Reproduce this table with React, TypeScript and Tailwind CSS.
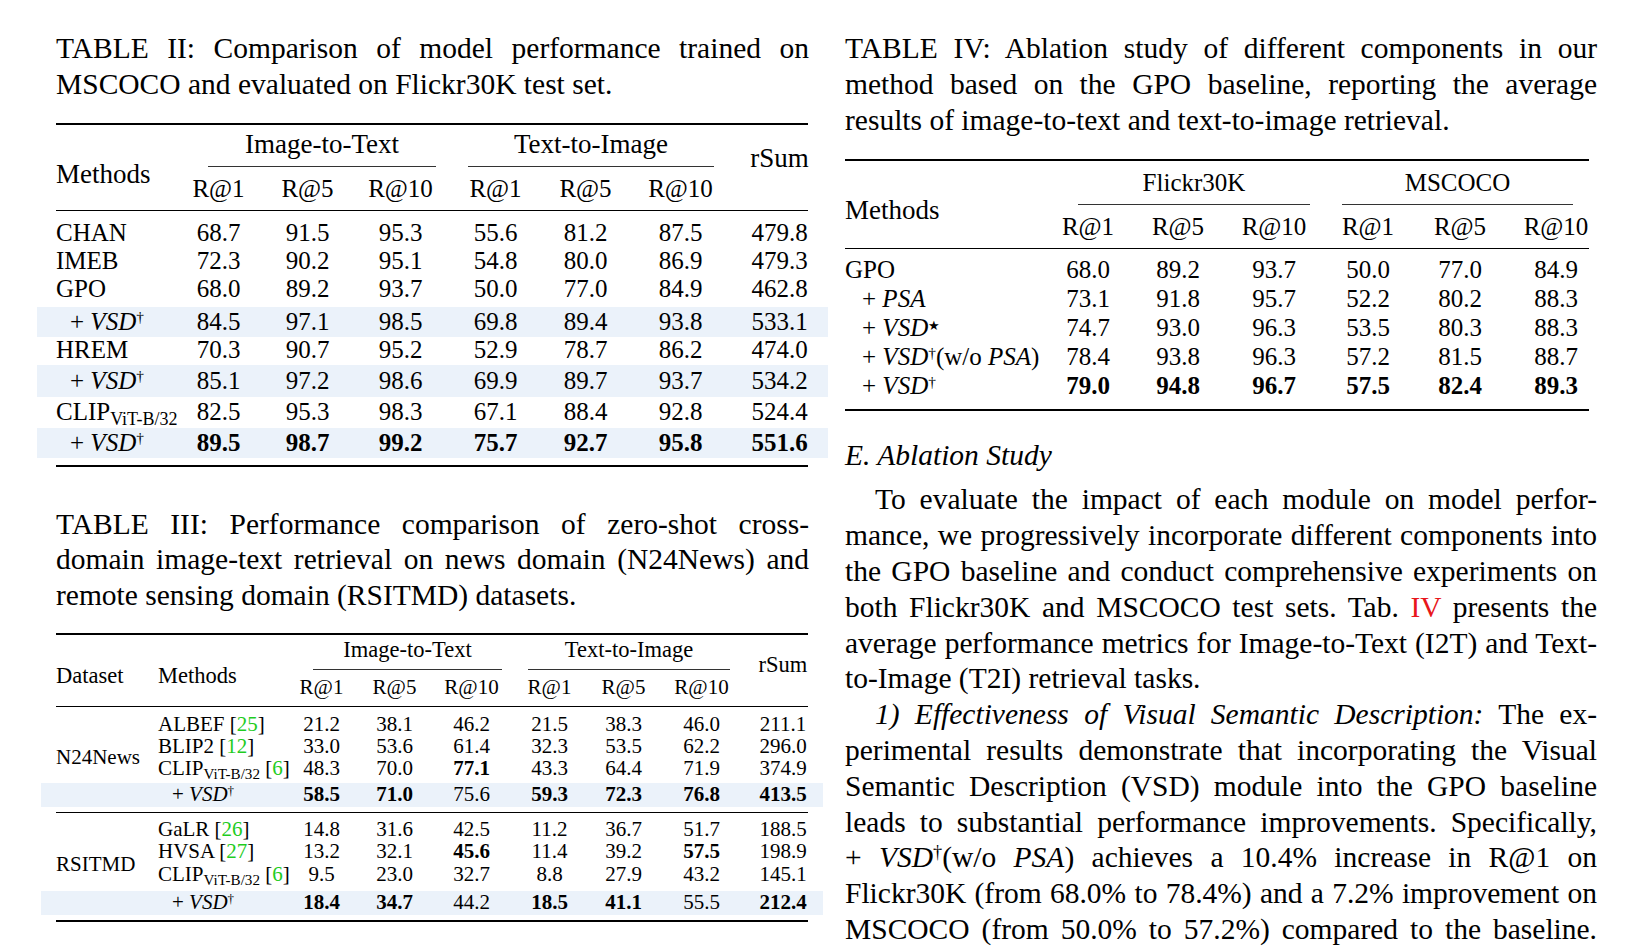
import type { ReactNode } from "react";

// one printed line; justified unless it ends a paragraph
function Line({ children, last, indent }: { children: ReactNode; last?: boolean; indent?: boolean }) {
  return (
    <div
      className={
        "whitespace-nowrap " +
        (last ? "text-left" : "text-justify [text-align-last:justify] [word-spacing:-1px]") +
        (indent ? " pl-[30px]" : "")
      }
    >
      {children}
    </div>
  );
}

const Vsd = ({ star }: { star?: boolean }) => (
  <>
    <i>VSD</i>
    {star ? <sup className="text-[0.5em]">★</sup> : <sup className="text-[0.62em]">†</sup>}
  </>
);

const Clip = () => (
  <>
    CLIP<sub className="text-[0.72em]">ViT-B/32</sub>
  </>
);

const Cite = ({ n }: { n: string }) => (
  <>
    [<span className="text-[#1fcc1f]">{n}</span>]
  </>
);

function Num({ v }: { v: string }) {
  const bold = v.startsWith("*");
  return <div className={"text-center" + (bold ? " font-bold" : "")}>{bold ? v.slice(1) : v}</div>;
}

/* ---------- Table II ---------- */
const T2 = "grid grid-cols-[137px_89px_89px_97px_93px_87px_103px_95px]";

const t2Rows: { m: ReactNode; v: string[]; cls: string; plus?: boolean }[] = [
  { m: "CHAN", v: ["68.7", "91.5", "95.3", "55.6", "81.2", "87.5", "479.8"], cls: "mt-[8px] h-[28px]" },
  { m: "IMEB", v: ["72.3", "90.2", "95.1", "54.8", "80.0", "86.9", "479.3"], cls: "h-[28px]" },
  { m: "GPO", v: ["68.0", "89.2", "93.7", "50.0", "77.0", "84.9", "462.8"], cls: "h-[28px]" },
  { m: <Vsd />, plus: true, v: ["84.5", "97.1", "98.5", "69.8", "89.4", "93.8", "533.1"], cls: "mt-[4px] h-[30px] bg-[#ebf2fa]" },
  { m: "HREM", v: ["70.3", "90.7", "95.2", "52.9", "78.7", "86.2", "474.0"], cls: "h-[24px]" },
  { m: <Vsd />, plus: true, v: ["85.1", "97.2", "98.6", "69.9", "89.7", "93.7", "534.2"], cls: "mt-[4px] h-[32px] bg-[#ebf2fa]" },
  { m: <Clip />, v: ["82.5", "95.3", "98.3", "67.1", "88.4", "92.8", "524.4"], cls: "h-[30px]" },
  { m: <Vsd />, plus: true, v: ["*89.5", "*98.7", "*99.2", "*75.7", "*92.7", "*95.8", "*551.6"], cls: "mt-[1px] h-[30px] bg-[#ebf2fa]" },
];

function TableTwo() {
  return (
    <div className="text-[25px] leading-none">
      <div className="ml-[19px] h-[2px] w-[752px] bg-black" />
      <div className={`${T2} grid-rows-[42px_43px]`}>
        <div className="row-span-2 flex items-center pl-[19px] pt-[15px] text-[27px]">Methods</div>
        <div className="col-span-3 flex items-end">
          <div className="ml-[34px] mr-[13px] flex-1 border-b border-[#333] pb-[8px] text-center text-[27px]">Image-to-Text</div>
        </div>
        <div className="col-span-3 flex items-end">
          <div className="ml-[19px] mr-[18px] flex-1 border-b border-[#333] pb-[8px] text-center text-[27px]">Text-to-Image</div>
        </div>
        <div className="row-span-2 flex items-center justify-center pb-[17px] text-[27px]">rSum</div>
        {["R@1", "R@5", "R@10", "R@1", "R@5", "R@10"].map((r, i) => (
          <div key={i} className="flex items-center justify-center">{r}</div>
        ))}
      </div>
      <div className="ml-[19px] h-px w-[752px] bg-black" />
      {t2Rows.map((row, i) => (
        <div key={i} className={`${T2} items-center ${row.cls}`}>
          <div className={"whitespace-nowrap " + (row.plus ? "pl-[33px]" : "pl-[19px]")}>
            {row.plus && "+ "}
            {row.m}
          </div>
          {row.v.map((v, j) => (
            <Num key={j} v={v} />
          ))}
        </div>
      ))}
      <div className="ml-[19px] mt-[7px] h-[2px] w-[752px] bg-black" />
    </div>
  );
}

/* ---------- Table III ---------- */
const T3 = "grid grid-cols-[107px_137px_73px_73px_81px_75px_73px_83px_80px]";
const T3Row = "grid grid-cols-[137px_73px_73px_81px_75px_73px_83px_80px] items-center";

type Row3 = { m: ReactNode; v: string[]; cls: string; plus?: boolean };

const news: Row3[] = [
  { m: <>ALBEF <Cite n="25" /></>, v: ["21.2", "38.1", "46.2", "21.5", "38.3", "46.0", "211.1"], cls: "mt-[7px] h-[22px]" },
  { m: <>BLIP2 <Cite n="12" /></>, v: ["33.0", "53.6", "61.4", "32.3", "53.5", "62.2", "296.0"], cls: "h-[22px]" },
  { m: <><Clip /> <Cite n="6" /></>, v: ["48.3", "70.0", "*77.1", "43.3", "64.4", "71.9", "374.9"], cls: "h-[21px]" },
  { m: <Vsd />, plus: true, v: ["*58.5", "*71.0", "75.6", "*59.3", "*72.3", "*76.8", "*413.5"], cls: "mt-[4px] mb-[5px] h-[24px] -ml-[107px] pl-[107px] bg-[#ebf2fa]" },
];

const remote: Row3[] = [
  { m: <>GaLR <Cite n="26" /></>, v: ["14.8", "31.6", "42.5", "11.2", "36.7", "51.7", "188.5"], cls: "mt-[6px] h-[22px]" },
  { m: <>HVSA <Cite n="27" /></>, v: ["13.2", "32.1", "*45.6", "11.4", "39.2", "*57.5", "198.9"], cls: "h-[22px]" },
  { m: <><Clip /> <Cite n="6" /></>, v: ["9.5", "23.0", "32.7", "8.8", "27.9", "43.2", "145.1"], cls: "h-[23px]" },
  { m: <Vsd />, plus: true, v: ["*18.4", "*34.7", "44.2", "*18.5", "*41.1", "55.5", "*212.4"], cls: "mt-[5px] mb-[5px] h-[24px] -ml-[107px] pl-[107px] bg-[#ebf2fa]" },
];

function Group({ name, rows }: { name: string; rows: Row3[] }) {
  return (
    <div className="flex">
      <div className="flex w-[107px] shrink-0 items-center pb-[4px] pl-[15px]">{name}</div>
      <div className="flex flex-1 flex-col">
        {rows.map((row, i) => (
          <div key={i} className={`${T3Row} ${row.cls}`}>
            <div className={"whitespace-nowrap " + (row.plus ? "pl-[24px]" : "pl-[10px]")}>
              {row.plus && "+ "}
              {row.m}
            </div>
            {row.v.map((v, j) => (
              <Num key={j} v={v} />
            ))}
          </div>
        ))}
      </div>
    </div>
  );
}

function TableThree() {
  return (
    <div className="ml-[4px] w-[782px] text-[21px] leading-none">
      <div className="ml-[15px] h-[2px] w-[752px] bg-black" />
      <div className={`${T3} grid-rows-[35px_36px]`}>
        <div className="row-span-2 flex items-center pl-[15px] pt-[11px] text-[22.5px]">Dataset</div>
        <div className="row-span-2 flex items-center pl-[10px] pt-[11px] text-[22.5px]">Methods</div>
        <div className="col-span-3 flex items-end">
          <div className="ml-[28px] mr-[10px] flex-1 border-b border-[#333] pb-[7px] text-center text-[22.5px]">Image-to-Text</div>
        </div>
        <div className="col-span-3 flex items-end">
          <div className="ml-[16px] mr-[13px] flex-1 border-b border-[#333] pb-[7px] text-center text-[22.5px]">Text-to-Image</div>
        </div>
        <div className="row-span-2 flex items-center justify-center pb-[11px] text-[22.5px]">rSum</div>
        {["R@1", "R@5", "R@10", "R@1", "R@5", "R@10"].map((r, i) => (
          <div key={i} className="flex items-center justify-center">{r}</div>
        ))}
      </div>
      <div className="ml-[15px] h-px w-[752px] bg-black" />
      <Group name="N24News" rows={news} />
      <div className="ml-[15px] h-px w-[752px] bg-black" />
      <Group name="RSITMD" rows={remote} />
      <div className="ml-[15px] h-[2px] w-[752px] bg-black" />
    </div>
  );
}

/* ---------- Table IV ---------- */
const T4 = "grid grid-cols-[198px_90px_90px_102px_86px_98px_94px]";

const t4Rows: { m: ReactNode; v: string[]; plus?: boolean }[] = [
  { m: "GPO", v: ["68.0", "89.2", "93.7", "50.0", "77.0", "84.9"] },
  { m: <i>PSA</i>, plus: true, v: ["73.1", "91.8", "95.7", "52.2", "80.2", "88.3"] },
  { m: <Vsd star />, plus: true, v: ["74.7", "93.0", "96.3", "53.5", "80.3", "88.3"] },
  { m: <><Vsd />(w/o <i>PSA</i>)</>, plus: true, v: ["78.4", "93.8", "96.3", "57.2", "81.5", "88.7"] },
  { m: <Vsd />, plus: true, v: ["*79.0", "*94.8", "*96.7", "*57.5", "*82.4", "*89.3"] },
];

function TableFour() {
  return (
    <div className="text-[25px] leading-none">
      <div className="h-[2px] w-[744px] bg-black" />
      <div className={`${T4} grid-rows-[44px_43px]`}>
        <div className="row-span-2 flex items-center pt-[12px] text-[27px]">Methods</div>
        <div className="col-span-3 flex items-end">
          <div className="ml-[35px] mr-[15px] flex-1 border-b border-[#333] pb-[9px] text-center">Flickr30K</div>
        </div>
        <div className="col-span-3 flex items-end">
          <div className="ml-[17px] mr-[30px] flex-1 border-b border-[#333] pb-[9px] text-center">MSCOCO</div>
        </div>
        {["R@1", "R@5", "R@10", "R@1", "R@5", "R@10"].map((r, i) => (
          <div key={i} className="flex items-center justify-center">{r}</div>
        ))}
      </div>
      <div className="h-px w-[744px] bg-black" />
      <div className="pt-[6px]">
        {t4Rows.map((row, i) => (
          <div key={i} className={`${T4} h-[29px] items-center`}>
            <div className={"whitespace-nowrap " + (row.plus ? "pl-[17px]" : "")}>
              {row.plus && "+ "}
              {row.m}
            </div>
            {row.v.map((v, j) => (
              <Num key={j} v={v} />
            ))}
          </div>
        ))}
      </div>
      <div className="mt-[9px] h-[2px] w-[744px] bg-black" />
    </div>
  );
}

export default function App() {
  return (
    <div className="min-h-screen w-full bg-white font-['Liberation_Serif','Times_New_Roman',serif] text-black">
      <div className="flex pl-[37px] pt-[31px]">
        {/* left column */}
        <div className="w-[791px] shrink-0">
          <div className="ml-[19px] w-[753px] text-[29.5px] leading-[35.8px]">
            <Line>TABLE II: Comparison of model performance trained on</Line>
            <Line last>MSCOCO and evaluated on Flickr30K test set.</Line>
          </div>
          <div className="mt-[20px]">
            <TableTwo />
          </div>
          <div className="ml-[19px] mt-[40px] w-[753px] text-[29.5px] leading-[35.8px]">
            <Line>TABLE III: Performance comparison of zero-shot cross-</Line>
            <Line>domain image-text retrieval on news domain (N24News) and</Line>
            <Line last>remote sensing domain (RSITMD) datasets.</Line>
          </div>
          <div className="mt-[19px]">
            <TableThree />
          </div>
        </div>

        {/* right column */}
        <div className="ml-[17px] w-[752px] shrink-0">
          <div className="text-[29.5px] leading-[35.8px]">
            <Line>TABLE IV: Ablation study of different components in our</Line>
            <Line>method based on the GPO baseline, reporting the average</Line>
            <Line last>results of image-to-text and text-to-image retrieval.</Line>
          </div>
          <div className="mt-[21px]">
            <TableFour />
          </div>
          <div className="mt-[26px] text-[29.5px] leading-[36px]">
            <i>E. Ablation Study</i>
          </div>
          <div className="mt-[9px] text-[29.5px] leading-[35.8px]">
            <Line indent>To evaluate the impact of each module on model perfor-</Line>
            <Line>mance, we progressively incorporate different components into</Line>
            <Line>the GPO baseline and conduct comprehensive experiments on</Line>
            <Line>
              both Flickr30K and MSCOCO test sets. Tab. <span className="text-[#e8161b]">IV</span> presents the
            </Line>
            <Line>average performance metrics for Image-to-Text (I2T) and Text-</Line>
            <Line last>to-Image (T2I) retrieval tasks.</Line>
            <Line indent>
              <i>1) Effectiveness of Visual Semantic Description:</i> The ex-
            </Line>
            <Line>perimental results demonstrate that incorporating the Visual</Line>
            <Line>Semantic Description (VSD) module into the GPO baseline</Line>
            <Line>leads to substantial performance improvements. Specifically,</Line>
            <Line>
              + <span className="inline-block"><Vsd />(w/o</span> <i>PSA</i>) achieves a 10.4% increase in R@1 on
            </Line>
            <Line>Flickr30K (from 68.0% to 78.4%) and a 7.2% improvement on</Line>
            <Line>MSCOCO (from 50.0% to 57.2%) compared to the baseline.</Line>
          </div>
        </div>
      </div>
    </div>
  );
}
